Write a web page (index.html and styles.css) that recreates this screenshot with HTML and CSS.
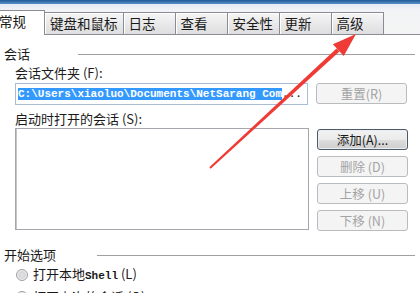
FILE: index.html
```html
<!DOCTYPE html>
<html lang="zh-CN">
<head>
<meta charset="utf-8">
<title>会话选项</title>
<link rel="stylesheet" href="styles.css">
</head>
<body>
<div class="topbar"></div>
<div class="tabs">
  <div class="tab tab-active">常规</div>
  <div class="tab">键盘和鼠标</div>
  <div class="tab">日志</div>
  <div class="tab">查看</div>
  <div class="tab">安全性</div>
  <div class="tab">更新</div>
  <div class="tab">高级</div>
</div>
<div class="pane">
  <div class="group-head">
    <span class="group-label">会话</span>
    <span class="group-line line-a"></span>
  </div>
  <div class="field-label">会话文件夹 (F):</div>
  <div class="row">
    <div class="input"><span class="sel">C:\Users\xiaoluo\Documents\NetSarang Com</span><span class="more">...</span></div>
    <div class="btn btn-disabled">重置(R)</div>
  </div>
  <div class="field-label label-gap">启动时打开的会话 (S):</div>
  <div class="row list-row">
    <div class="listbox"></div>
    <div class="btn-col">
      <div class="btn btn-default">添加(A)...</div>
      <div class="btn btn-disabled">删除 (D)</div>
      <div class="btn btn-disabled">上移 (U)</div>
      <div class="btn btn-disabled">下移 (N)</div>
    </div>
  </div>
  <div class="group-head group-gap">
    <span class="group-label">开始选项</span>
    <span class="group-line line-b"></span>
  </div>
  <div class="radio-row"><span class="radio"></span><span>打开本地<span class="latin">Shell</span> (L)</span></div>
  <div class="radio-row radio-next"><span class="radio"></span><span>打开上次的会话 (O)</span></div>
</div>
<svg class="arrow" width="420" height="293" viewBox="0 0 420 293">
  <polygon points="209.3,167.3 210.7,168.7 339.5,51.6 336.5,48.4" fill="#ef3b36"/>
  <polygon points="356,34 332.9,44.3 343.7,56.1" fill="#ef3b36"/>
</svg>
</body>
</html>
```
FILE: styles.css
```css
html, body {
  margin: 0;
  padding: 0;
}
body {
  width: 420px;
  height: 293px;
  overflow: hidden;
  position: relative;
  background: #ffffff;
  font-family: "Noto Sans CJK SC", "Microsoft YaHei", sans-serif;
  font-size: 13px;
  color: #1a1a1a;
}
.topbar {
  height: 4px;
  background: linear-gradient(#1d5a98, #5b90c6);
}
.tabs {
  height: 31px;
  box-sizing: border-box;
  display: flex;
  align-items: flex-end;
  background: linear-gradient(#e4ebf3, #f1f3f6 6px, #f4f4f4);
  border-bottom: 1px solid #898c95;
}
.tab {
  box-sizing: border-box;
  height: 22px;
  min-width: 52px;
  padding: 0 5px;
  line-height: 21px;
  font-size: 13.5px;
  white-space: nowrap;
  border: 1px solid #898c95;
  border-bottom: none;
  border-left: none;
  background: linear-gradient(#f6f6f6, #e9e9e9 50%, #dedede);
  box-shadow: inset 1px 1px 0 #ffffff;
}
.tab-active {
  position: relative;
  margin-left: -8px;
  width: 53px;
  height: 25px;
  margin-bottom: -1px;
  padding-left: 7px;
  line-height: 20px;
  background: #ffffff;
  box-shadow: none;
}
.pane {
  padding-left: 4px;
}
.group-head {
  display: flex;
  align-items: center;
  height: 16px;
  margin-top: 11px;
  line-height: 16px;
}
.group-gap {
  margin-top: 16px;
}
.group-line {
  flex: 1;
  height: 1px;
  margin-right: 5px;
  background: #a0a0a0;
}
.line-a {
  margin-left: 48px;
}
.line-b {
  margin-left: 41px;
}
.field-label {
  margin-top: 3px;
  padding-left: 11px;
  line-height: 16px;
}
.label-gap {
  margin-top: 6px;
}
.row {
  display: flex;
  align-items: flex-start;
  margin-top: 2px;
  padding-left: 11px;
}
.list-row {
  margin-top: 1px;
}
.input {
  box-sizing: border-box;
  width: 293px;
  height: 22px;
  padding: 3px 1px 0 2px;
  border: 1px solid #a9bcd6;
  white-space: nowrap;
  overflow: hidden;
  font-family: "Liberation Mono", monospace;
  font-weight: bold;
  font-size: 11px;
  line-height: 14px;
}
.sel {
  background: #3399ff;
  color: #ffffff;
}
.more {
  color: #333333;
}
.btn {
  box-sizing: border-box;
  width: 91px;
  height: 21px;
  margin-left: 8px;
  border-radius: 3px;
  text-align: center;
  line-height: 19px;
  font-size: 12.5px;
  border: 1px solid #707070;
  background: linear-gradient(#f2f2f2, #ebebeb 50%, #dddddd 50%, #cfcfcf);
}
.btn-default {
  border-color: #505a66;
  box-shadow: inset 0 0 0 1px #e8eef4;
}
.btn-disabled {
  border-color: #b8bcbf;
  background: #f4f4f4;
  color: #a3a3a3;
}
.listbox {
  box-sizing: border-box;
  width: 294px;
  height: 102px;
  border: 1px solid #a6a6ae;
  box-shadow: inset 1px 0 0 #c4c4cb;
}
.btn-col {
  display: flex;
  flex-direction: column;
  gap: 6px;
  margin-top: 1px;
}
.radio-row {
  display: flex;
  align-items: center;
  gap: 5px;
  height: 16px;
  margin-top: 4px;
  padding-left: 12px;
  line-height: 16px;
}
.radio-next {
  margin-top: 6px;
}
.radio {
  box-sizing: border-box;
  width: 12px;
  height: 12px;
  border-radius: 50%;
  border: 1px solid #9a9ea4;
  background: radial-gradient(circle at 50% 50%, #e4e4e4 0, #d6d6d6 45%, #f4f4f4 70%);
}
.latin {
  font-family: "Liberation Mono", monospace;
  font-size: 11px;
  font-weight: bold;
}
.arrow {
  position: absolute;
  left: 0;
  top: 0;
  pointer-events: none;
}
```
